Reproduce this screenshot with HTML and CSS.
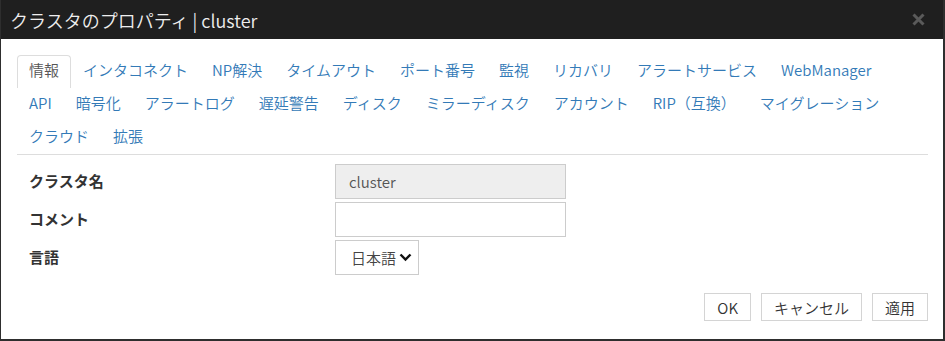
FILE: index.html
```html
<!DOCTYPE html>
<html lang="ja">
<head>
  <meta charset="UTF-8">
  <meta name="viewport" content="width=device-width, initial-scale=1.0">
  <title>クラスタのプロパティ</title>
  <link rel="stylesheet" href="styles.css">
</head>
<body>

<div class="modal">
  <div class="modal-header">
    <h4 class="modal-title">クラスタのプロパティ | cluster</h4>
    <span class="close">
      <svg width="13" height="13" viewBox="0 0 13 13"><path d="M1.5 1.5 L11.5 11.5 M11.5 1.5 L1.5 11.5" stroke="#5a5a5a" stroke-width="3" fill="none"/></svg>
    </span>
  </div>

  <div class="modal-body">
    <ul class="nav-tabs">
      <li class="active"><a>情報</a></li>
      <li><a>インタコネクト</a></li>
      <li><a>NP解決</a></li>
      <li><a>タイムアウト</a></li>
      <li><a>ポート番号</a></li>
      <li><a>監視</a></li>
      <li><a>リカバリ</a></li>
      <li><a>アラートサービス</a></li>
      <li><a>WebManager</a></li>
      <li><a>API</a></li>
      <li><a>暗号化</a></li>
      <li><a>アラートログ</a></li>
      <li><a>遅延警告</a></li>
      <li><a>ディスク</a></li>
      <li><a>ミラーディスク</a></li>
      <li><a>アカウント</a></li>
      <li><a>RIP（互換）</a></li>
      <li><a>マイグレーション</a></li>
      <li><a>クラウド</a></li>
      <li><a>拡張</a></li>
    </ul>

    <form class="form-grid">
      <label>クラスタ名</label>
      <input type="text" class="form-control" value="cluster" disabled>

      <label>コメント</label>
      <input type="text" class="form-control">

      <label>言語</label>
      <div class="select-box">
        <span>日本語</span>
        <svg width="13" height="9" viewBox="0 0 13 9"><path d="M1.5 1.5 L6.5 6.5 L11.5 1.5" stroke="#111" stroke-width="2.4" fill="none"/></svg>
      </div>
    </form>
  </div>

  <div class="modal-footer">
    <button type="button">OK</button>
    <button type="button">キャンセル</button>
    <button type="button">適用</button>
  </div>
</div>

</body>
</html>
```

FILE: styles.css
```css
body {
  font-family: "Noto Sans CJK JP", "Noto Sans", sans-serif;
  font-weight: 350;
  background-color: #2e2e2e;
  margin: 0;
  padding: 0;
}

.modal {
  width: 942px;
  height: 339px;
  margin-left: 1px;
  background-color: #fff;
}

.modal-header {
  height: 39px;
  background-color: #1f1f1f;
  display: flex;
  align-items: center;
  justify-content: space-between;
  padding: 0 18px 0 9px;
}

.modal-title {
  margin: 0;
  color: #eee;
  font-size: 18px;
  font-weight: 350;
  line-height: 22px;
}

.close {
  display: flex;
  margin-top: -1px;
}

.modal-body {
  padding: 16px 15px 0 16px;
}

.nav-tabs {
  list-style: none;
  margin: 0;
  padding: 0;
  display: flex;
  flex-wrap: wrap;
  border-bottom: 1px solid #ddd;
}

.nav-tabs a {
  display: block;
  padding: 0 11px 4px;
  line-height: 28px;
  font-size: 15px;
  color: #337ab7;
  border: 1px solid transparent;
  border-bottom: none;
  border-radius: 4px 4px 0 0;
}

.nav-tabs li.active a {
  color: #555;
  border-color: #ddd;
}

.form-grid {
  display: grid;
  grid-template-columns: 306px auto;
  row-gap: 3px;
  align-items: center;
  justify-items: start;
  margin-top: 9px;
  padding-left: 12px;
}

.form-grid label {
  font-size: 15px;
  font-weight: bold;
  color: #333;
  margin-top: -3px;
}

.form-control {
  width: 231px;
  height: 35px;
  box-sizing: border-box;
  border: 1px solid #ccc;
  padding: 0 13px;
  font-family: inherit;
  font-weight: 350;
  font-size: 15px;
  color: #555;
  background-color: #fff;
  outline: none;
}

.form-control:disabled {
  background-color: #eee;
}

.select-box {
  width: 84px;
  height: 35px;
  box-sizing: border-box;
  border: 1px solid #ccc;
  padding: 0 0 0 15px;
  display: flex;
  align-items: center;
  gap: 3px;
  font-size: 15px;
  color: #444;
}

.modal-footer {
  display: flex;
  justify-content: flex-end;
  gap: 10px;
  margin-top: 18px;
  padding-right: 15px;
}

.modal-footer button {
  height: 28px;
  padding: 0 12px;
  background-color: #fff;
  border: 1px solid #d4d4d4;
  font-family: inherit;
  font-weight: 350;
  font-size: 15px;
  color: #333;
  cursor: pointer;
}
```
